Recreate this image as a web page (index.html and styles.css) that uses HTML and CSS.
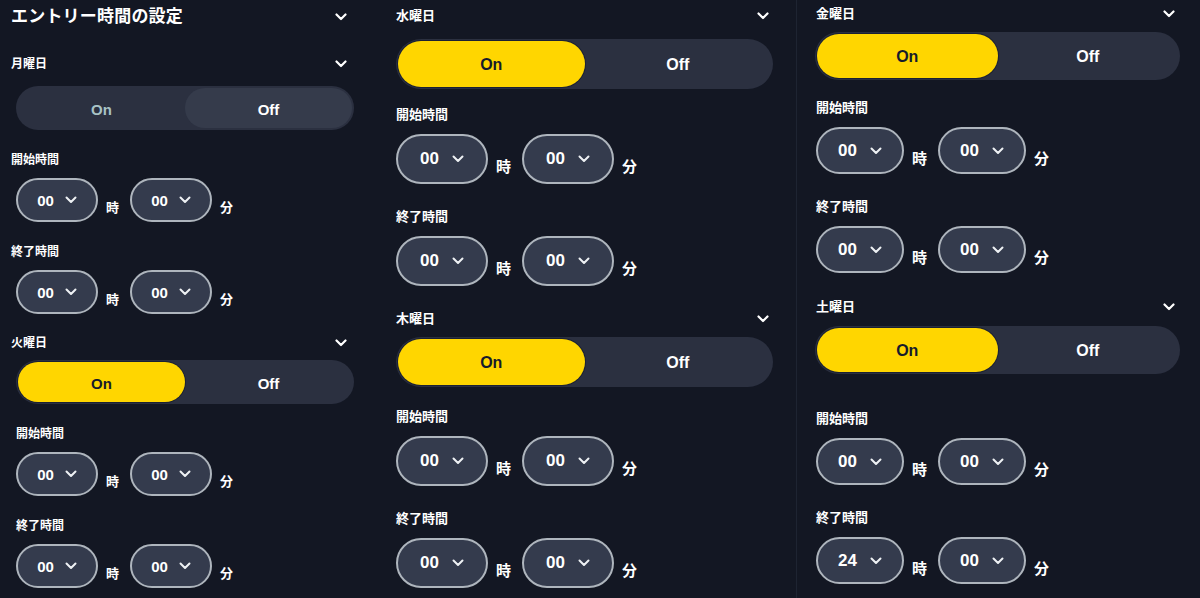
FILE: index.html
```html
<!DOCTYPE html>
<html lang="ja">
<head>
<meta charset="utf-8">
<title>エントリー時間の設定</title>
<link rel="stylesheet" href="styles.css">
</head>
<body>
<main class="page">
  <section class="col c1">
    <div class="head title-row">
      <h1 class="title">エントリー時間の設定</h1>
      <svg class="chev" viewBox="0 0 12 8"><path d="M1.5 1.5 L6 6 L10.5 1.5"/></svg>
    </div>
    <div class="head day-head">
      <span class="day">月曜日</span>
      <svg class="chev" viewBox="0 0 12 8"><path d="M1.5 1.5 L6 6 L10.5 1.5"/></svg>
    </div>
    <div class="toggle is-off"><span class="seg seg-on">On</span><span class="seg seg-off">Off</span></div>
    <div class="field-label">開始時間</div>
    <div class="time-row">
      <div class="select"><span>00</span><svg class="chev-s" viewBox="0 0 12 8"><path d="M1.5 1.5 L6 6 L10.5 1.5"/></svg></div>
      <span class="unit">時</span>
      <div class="select"><span>00</span><svg class="chev-s" viewBox="0 0 12 8"><path d="M1.5 1.5 L6 6 L10.5 1.5"/></svg></div>
      <span class="unit">分</span>
    </div>
    <div class="field-label">終了時間</div>
    <div class="time-row">
      <div class="select"><span>00</span><svg class="chev-s" viewBox="0 0 12 8"><path d="M1.5 1.5 L6 6 L10.5 1.5"/></svg></div>
      <span class="unit">時</span>
      <div class="select"><span>00</span><svg class="chev-s" viewBox="0 0 12 8"><path d="M1.5 1.5 L6 6 L10.5 1.5"/></svg></div>
      <span class="unit">分</span>
    </div>
    <div class="head day-head">
      <span class="day">火曜日</span>
      <svg class="chev" viewBox="0 0 12 8"><path d="M1.5 1.5 L6 6 L10.5 1.5"/></svg>
    </div>
    <div class="toggle is-on"><span class="seg seg-on">On</span><span class="seg seg-off">Off</span></div>
    <div class="field-label indent">開始時間</div>
    <div class="time-row">
      <div class="select"><span>00</span><svg class="chev-s" viewBox="0 0 12 8"><path d="M1.5 1.5 L6 6 L10.5 1.5"/></svg></div>
      <span class="unit">時</span>
      <div class="select"><span>00</span><svg class="chev-s" viewBox="0 0 12 8"><path d="M1.5 1.5 L6 6 L10.5 1.5"/></svg></div>
      <span class="unit">分</span>
    </div>
    <div class="field-label indent">終了時間</div>
    <div class="time-row">
      <div class="select"><span>00</span><svg class="chev-s" viewBox="0 0 12 8"><path d="M1.5 1.5 L6 6 L10.5 1.5"/></svg></div>
      <span class="unit">時</span>
      <div class="select"><span>00</span><svg class="chev-s" viewBox="0 0 12 8"><path d="M1.5 1.5 L6 6 L10.5 1.5"/></svg></div>
      <span class="unit">分</span>
    </div>
  </section>

  <section class="col c2">
    <div class="head day-head">
      <span class="day">水曜日</span>
      <svg class="chev" viewBox="0 0 12 8"><path d="M1.5 1.5 L6 6 L10.5 1.5"/></svg>
    </div>
    <div class="toggle is-on"><span class="seg seg-on">On</span><span class="seg seg-off">Off</span></div>
    <div class="field-label ta-tight">開始時間</div>
    <div class="time-row">
      <div class="select"><span>00</span><svg class="chev-s" viewBox="0 0 12 8"><path d="M1.5 1.5 L6 6 L10.5 1.5"/></svg></div>
      <span class="unit">時</span>
      <div class="select"><span>00</span><svg class="chev-s" viewBox="0 0 12 8"><path d="M1.5 1.5 L6 6 L10.5 1.5"/></svg></div>
      <span class="unit">分</span>
    </div>
    <div class="field-label">終了時間</div>
    <div class="time-row">
      <div class="select"><span>00</span><svg class="chev-s" viewBox="0 0 12 8"><path d="M1.5 1.5 L6 6 L10.5 1.5"/></svg></div>
      <span class="unit">時</span>
      <div class="select"><span>00</span><svg class="chev-s" viewBox="0 0 12 8"><path d="M1.5 1.5 L6 6 L10.5 1.5"/></svg></div>
      <span class="unit">分</span>
    </div>
    <div class="head day-head">
      <span class="day">木曜日</span>
      <svg class="chev" viewBox="0 0 12 8"><path d="M1.5 1.5 L6 6 L10.5 1.5"/></svg>
    </div>
    <div class="toggle is-on"><span class="seg seg-on">On</span><span class="seg seg-off">Off</span></div>
    <div class="field-label">開始時間</div>
    <div class="time-row">
      <div class="select"><span>00</span><svg class="chev-s" viewBox="0 0 12 8"><path d="M1.5 1.5 L6 6 L10.5 1.5"/></svg></div>
      <span class="unit">時</span>
      <div class="select"><span>00</span><svg class="chev-s" viewBox="0 0 12 8"><path d="M1.5 1.5 L6 6 L10.5 1.5"/></svg></div>
      <span class="unit">分</span>
    </div>
    <div class="field-label">終了時間</div>
    <div class="time-row">
      <div class="select"><span>00</span><svg class="chev-s" viewBox="0 0 12 8"><path d="M1.5 1.5 L6 6 L10.5 1.5"/></svg></div>
      <span class="unit">時</span>
      <div class="select"><span>00</span><svg class="chev-s" viewBox="0 0 12 8"><path d="M1.5 1.5 L6 6 L10.5 1.5"/></svg></div>
      <span class="unit">分</span>
    </div>
  </section>

  <section class="col c3">
    <div class="head day-head">
      <span class="day">金曜日</span>
      <svg class="chev" viewBox="0 0 12 8"><path d="M1.5 1.5 L6 6 L10.5 1.5"/></svg>
    </div>
    <div class="toggle is-on"><span class="seg seg-on">On</span><span class="seg seg-off">Off</span></div>
    <div class="field-label">開始時間</div>
    <div class="time-row">
      <div class="select"><span>00</span><svg class="chev-s" viewBox="0 0 12 8"><path d="M1.5 1.5 L6 6 L10.5 1.5"/></svg></div>
      <span class="unit">時</span>
      <div class="select"><span>00</span><svg class="chev-s" viewBox="0 0 12 8"><path d="M1.5 1.5 L6 6 L10.5 1.5"/></svg></div>
      <span class="unit">分</span>
    </div>
    <div class="field-label">終了時間</div>
    <div class="time-row">
      <div class="select"><span>00</span><svg class="chev-s" viewBox="0 0 12 8"><path d="M1.5 1.5 L6 6 L10.5 1.5"/></svg></div>
      <span class="unit">時</span>
      <div class="select"><span>00</span><svg class="chev-s" viewBox="0 0 12 8"><path d="M1.5 1.5 L6 6 L10.5 1.5"/></svg></div>
      <span class="unit">分</span>
    </div>
    <div class="head day-head">
      <span class="day">土曜日</span>
      <svg class="chev" viewBox="0 0 12 8"><path d="M1.5 1.5 L6 6 L10.5 1.5"/></svg>
    </div>
    <div class="toggle is-on"><span class="seg seg-on">On</span><span class="seg seg-off">Off</span></div>
    <div class="field-label ta-loose">開始時間</div>
    <div class="time-row">
      <div class="select"><span>00</span><svg class="chev-s" viewBox="0 0 12 8"><path d="M1.5 1.5 L6 6 L10.5 1.5"/></svg></div>
      <span class="unit">時</span>
      <div class="select"><span>00</span><svg class="chev-s" viewBox="0 0 12 8"><path d="M1.5 1.5 L6 6 L10.5 1.5"/></svg></div>
      <span class="unit">分</span>
    </div>
    <div class="field-label">終了時間</div>
    <div class="time-row">
      <div class="select"><span>24</span><svg class="chev-s" viewBox="0 0 12 8"><path d="M1.5 1.5 L6 6 L10.5 1.5"/></svg></div>
      <span class="unit">時</span>
      <div class="select"><span>00</span><svg class="chev-s" viewBox="0 0 12 8"><path d="M1.5 1.5 L6 6 L10.5 1.5"/></svg></div>
      <span class="unit">分</span>
    </div>
  </section>
</main>
</body>
</html>
```

FILE: styles.css
```css
* { box-sizing: border-box; }

html, body {
  margin: 0;
  padding: 0;
  background: #131723;
}

body {
  font-family: "Liberation Sans", "Noto Sans CJK JP", sans-serif;
  color: #ffffff;
  width: 1200px;
  height: 598px;
  overflow: hidden;
}

.page {
  display: flex;
  height: 598px;
}

.col {
  display: flex;
  flex-direction: column;
  height: 598px;
  overflow: hidden;
  flex: none;
}

/* ---- column scales ---- */
.c1 {
  width: 370px;
  padding: 0 16px 0 11px;
  --lbl: 12px;
  --tg-h: 44px;
  --btn: 15px;
  --sel-w: 82px;
  --sel-h: 44px;
  --num: 15px;
  --unit: 13px;
  --unit-b: 8px;
  --sel-gap: 11px;
  --chev-pr: 7px;
  --tg-first: 12px;
  --tg: 7px;
  --ta: 20px;
  --ac: 20px;
  --al: 8px;
  --dh: 19px;
  --tg-ml: 5px;
  --row-ml: 5px;
}

.c2 {
  width: 426px;
  padding: 6px 23px 0 26px;
  --lbl: 13px;
  --tg-h: 50px;
  --btn: 16px;
  --sel-w: 92px;
  --sel-h: 50px;
  --num: 17px;
  --unit: 15px;
  --unit-b: 10px;
  --sel-gap: 13px;
  --chev-pr: 4px;
  --tg-first: 13px;
  --tg: 8px;
  --ta: 20px;
  --ac: 23px;
  --al: 9px;
  --dh: 23px;
  --tg-ml: 0px;
  --row-ml: 0px;
}

.c3 {
  width: 404px;
  padding: 4px 20px 0 19px;
  border-left: 1px solid #1e2432;
  --lbl: 13px;
  --tg-h: 48px;
  --btn: 16px;
  --sel-w: 88px;
  --sel-h: 47px;
  --num: 17px;
  --unit: 15px;
  --unit-b: 8px;
  --sel-gap: 13px;
  --chev-pr: 5px;
  --tg-first: 8px;
  --tg: 9px;
  --ta: 18px;
  --ac: 23px;
  --al: 9px;
  --dh: 24px;
  --tg-ml: -1px;
  --row-ml: 0px;
}

/* ---- headers ---- */
.head {
  display: flex;
  align-items: center;
  justify-content: space-between;
  padding-right: var(--chev-pr);
  flex: none;
}

.title-row {
  height: 34px;
}

.title {
  margin: 0;
  font-size: 17px;
  font-weight: 700;
  line-height: 34px;
  letter-spacing: 0.2px;
}

.day-head {
  height: 20px;
  margin-top: var(--dh);
}

.col > .day-head:first-child { margin-top: 0; }
.title-row + .day-head { margin-top: 20px; }

.day {
  font-size: var(--lbl);
  font-weight: 700;
  line-height: 20px;
}

.chev {
  width: 12px;
  height: 8px;
  fill: none;
  stroke: #ffffff;
  stroke-width: 2.2;
  stroke-linecap: round;
  stroke-linejoin: round;
}

/* ---- toggle ---- */
.toggle {
  display: flex;
  height: var(--tg-h);
  margin-top: var(--tg);
  margin-left: var(--tg-ml);
  padding: 2px;
  border-radius: 999px;
  background: #2b3040;
  flex: none;
}

.day-head:first-child + .toggle,
.title-row + .day-head + .toggle { margin-top: var(--tg-first); }

.seg {
  flex: 1 1 0;
  display: flex;
  align-items: center;
  justify-content: center;
  padding-top: 2px;
  border-radius: 999px;
  font-size: var(--btn);
  font-weight: 700;
  color: #ffffff;
}

.is-on .seg-on {
  background: #ffd600;
  color: #161b2b;
  box-shadow: 0 0 0 1px #1b2133;
}

.is-off .seg-on {
  color: #a8c2c5;
}

.is-off .seg-off {
  background: #353b4b;
}

/* ---- fields ---- */
.field-label {
  margin-top: var(--ac);
  font-size: var(--lbl);
  font-weight: 700;
  line-height: 20px;
  height: 20px;
  flex: none;
}

.toggle + .field-label { margin-top: var(--ta); }
.toggle + .field-label.ta-tight { margin-top: 16px; }
.toggle + .field-label.ta-loose { margin-top: 35px; }
.field-label.indent { margin-left: 5px; }

.time-row {
  display: flex;
  align-items: flex-end;
  margin-top: var(--al);
  margin-left: var(--row-ml);
  flex: none;
}

.select {
  display: flex;
  align-items: center;
  justify-content: center;
  gap: var(--sel-gap);
  width: var(--sel-w);
  height: var(--sel-h);
  border-radius: 999px;
  background: #343b4d;
  border: 2px solid #aeb5bd;
  font-size: var(--num);
  font-weight: 700;
}

.chev-s {
  width: 12px;
  height: 8px;
  fill: none;
  stroke: #eef1f4;
  stroke-width: 2;
  stroke-linecap: round;
  stroke-linejoin: round;
}

.unit {
  font-size: var(--unit);
  font-weight: 700;
  line-height: 1;
  margin: 0 11px var(--unit-b) 8px;
}
```
